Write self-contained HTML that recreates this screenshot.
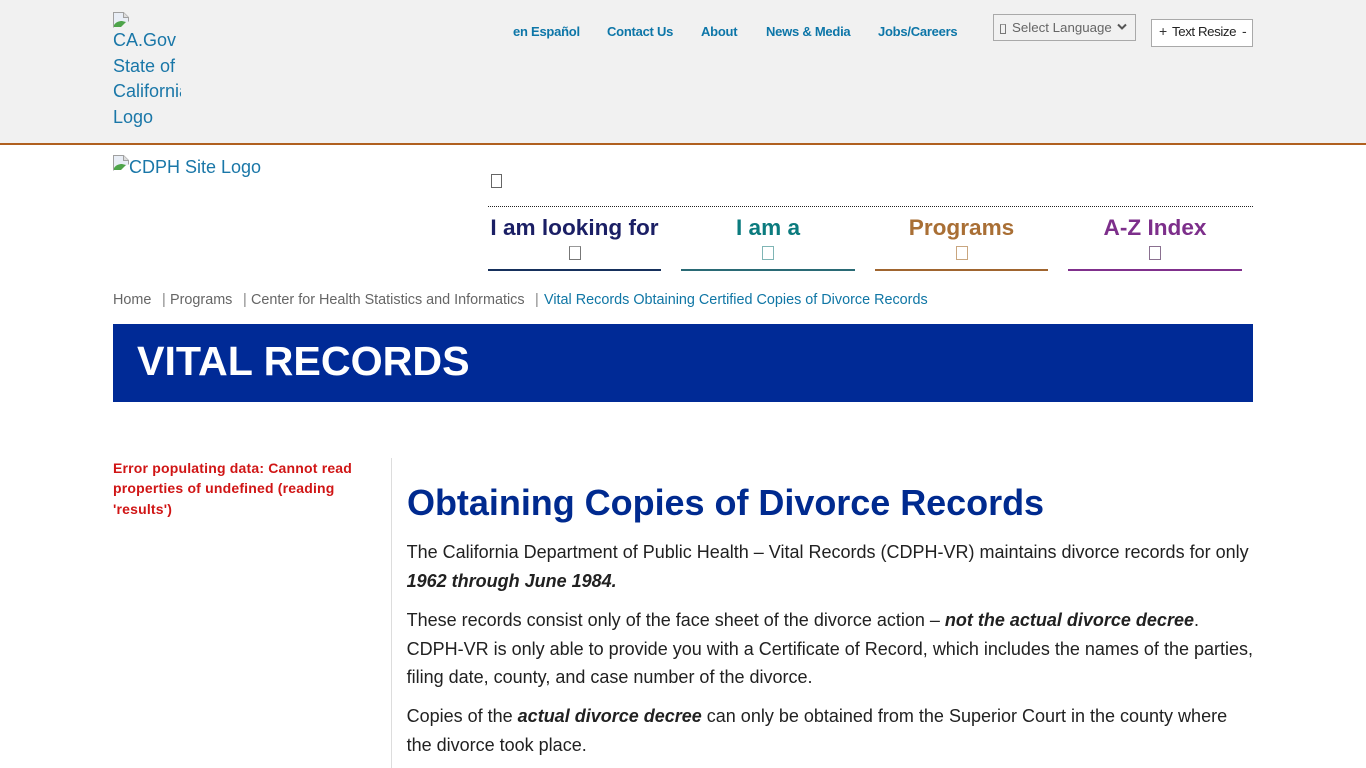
<!DOCTYPE html>
<html lang="en">
<head>
<meta charset="utf-8">
<title>Obtaining Copies of Divorce Records</title>
<style>
html,body{margin:0;padding:0;background:#fff;width:1366px;height:768px;overflow:hidden}
body{font-family:"Liberation Sans",Arial,sans-serif;position:relative}
.a{position:absolute;white-space:nowrap}
.top{left:0;top:0;width:1366px;height:143px;background:#f1f1f1;border-bottom:2px solid #b0601f}
.nav{font-size:13px;font-weight:bold;color:#0d76a8;top:24px;line-height:16px;letter-spacing:-.25px}
.box{display:block;position:absolute;border:1px solid #777;border-top-color:#999;box-sizing:border-box}
.m{font-size:22.6px;font-weight:bold;line-height:28px;top:214px;text-align:center}
.u{height:2px;top:269px}
.bc{font-size:14.4px;line-height:18px;top:291px;color:#666}
p{position:absolute;margin:0;left:406.6px;font-size:18px;line-height:28.8px;color:#212121;white-space:nowrap}
</style>
</head>
<body>
<div class="a top"></div>

<svg class="a" style="left:113px;top:12px" width="16" height="16" viewBox="0 0 16 16"><path d="M.5 15.5V.5h10l5 5v4" fill="#e9eef6" stroke="#a0a0a0"/><path d="M10.5.5v5h5" fill="#ddd" stroke="#a0a0a0"/><path d="M1 15v-2c2-3 5-4 8-4l4 1-5 5z" fill="#4ea44a"/></svg>
<div class="a" style="left:113px;top:28px;width:68px;height:103px;overflow:hidden;font-size:18px;line-height:25.6px;color:#1a77a8">CA.Gov<br>State of<br>California<br>Logo</div>

<div class="a nav" style="left:513px">en Español</div>
<div class="a nav" style="left:607px">Contact Us</div>
<div class="a nav" style="left:701px">About</div>
<div class="a nav" style="left:766px">News &amp; Media</div>
<div class="a nav" style="left:878px">Jobs/Careers</div>

<div class="a" style="left:993px;top:14px;width:143px;height:27px;box-sizing:border-box;border:1px solid #a9a9a9;background:#f1f1f1"></div>
<span class="box" style="left:1000px;top:24px;width:6px;height:10px"></span>
<div class="a" style="left:1012px;top:19px;font-size:13.3px;line-height:17px;color:#666">Select Language</div>
<svg class="a" style="left:1117px;top:23px" width="10" height="8" viewBox="0 0 10 8"><path d="M1 1.5l4 4 4-4" fill="none" stroke="#555" stroke-width="2"/></svg>

<div class="a" style="left:1151px;top:19px;width:102px;height:28px;box-sizing:border-box;border:1px solid #a9a9a9;background:#fff"></div>
<div class="a" style="left:1159px;top:23px;font-size:14px;line-height:17px;color:#333">+</div>
<div class="a" style="left:1172px;top:23px;font-size:13.3px;line-height:17px;color:#222;letter-spacing:-.42px">Text Resize</div>
<div class="a" style="left:1242px;top:23px;font-size:14px;line-height:17px;color:#333">-</div>

<svg class="a" style="left:113px;top:155px" width="16" height="16" viewBox="0 0 16 16"><path d="M.5 15.5V.5h10l5 5v4" fill="#e9eef6" stroke="#a0a0a0"/><path d="M10.5.5v5h5" fill="#ddd" stroke="#a0a0a0"/><path d="M1 15v-2c2-3 5-4 8-4l4 1-5 5z" fill="#4ea44a"/></svg>
<div class="a" style="left:129px;top:154px;font-size:18px;line-height:26px;color:#1a77a8">CDPH Site Logo</div>

<span class="box" style="left:491px;top:174px;width:11px;height:14px;border-color:#666"></span>
<div class="a" style="left:488px;top:206px;width:765px;border-top:1px dotted #222"></div>

<div class="a m" style="left:488px;width:173px;color:#1b1f65">I am looking for</div>
<span class="box" style="left:569px;top:246px;width:12px;height:14px"></span>
<div class="a u" style="left:488px;width:173px;background:#16305c"></div>

<div class="a m" style="left:681px;width:174px;color:#0b7b7e">I am a</div>
<span class="box" style="left:762px;top:246px;width:12px;height:14px;border-color:#7fb5b5"></span>
<div class="a u" style="left:681px;width:174px;background:#2a6a75"></div>

<div class="a m" style="left:875px;width:173px;color:#a96f35">Programs</div>
<span class="box" style="left:956px;top:246px;width:12px;height:14px;border-color:#c9a67f"></span>
<div class="a u" style="left:875px;width:173px;background:#a0652f"></div>

<div class="a m" style="left:1068px;width:174px;color:#7d2f8b">A-Z Index</div>
<span class="box" style="left:1149px;top:246px;width:12px;height:14px;border-color:#8a7090"></span>
<div class="a u" style="left:1068px;width:174px;background:#80308c"></div>

<div class="a bc" style="left:113px">Home</div>
<div class="a bc" style="left:162px;color:#888">|</div>
<div class="a bc" style="left:170px">Programs</div>
<div class="a bc" style="left:243px;color:#888">|</div>
<div class="a bc" style="left:251px">Center for Health Statistics and Informatics</div>
<div class="a bc" style="left:535px;color:#888">|</div>
<div class="a bc" style="left:544px;color:#0f76a5">Vital Records Obtaining Certified Copies of Divorce Records</div>

<div class="a" style="left:113px;top:324px;width:1140px;height:78px;background:#002a96"></div>
<div class="a" style="left:137px;top:337px;font-size:41.2px;line-height:48px;font-weight:bold;color:#fff">VITAL RECORDS</div>

<div class="a" style="left:113px;top:458px;font-size:14px;line-height:20.4px;font-weight:bold;color:#d01515;letter-spacing:.19px">Error populating data: Cannot read<br>properties of undefined (reading<br>'results')</div>

<div class="a" style="left:391px;top:458px;width:1px;height:310px;background:#ddd"></div>

<div class="a" style="left:407px;top:481px;font-size:36px;line-height:43px;font-weight:bold;color:#002a8f;letter-spacing:-.03px">Obtaining Copies of Divorce Records</div>

<p style="top:538px">The California Department of Public Health – Vital Records (CDPH-VR) maintains divorce records for only<br><b><i>1962 through June 1984.</i></b></p>
<p style="top:606px">These records consist only of the face sheet of the divorce action – <b><i>not the actual divorce decree</i></b>.<br>CDPH-VR is only able to provide you with a Certificate of Record, which includes the names of the parties,</p>
<p style="top:663px">filing date, county, and case number of the divorce.</p>
<p style="top:702px">Copies of the <b><i>actual divorce decree</i></b> can only be obtained from the Superior Court in the county where<br>the divorce took place.</p>
</body>
</html>
